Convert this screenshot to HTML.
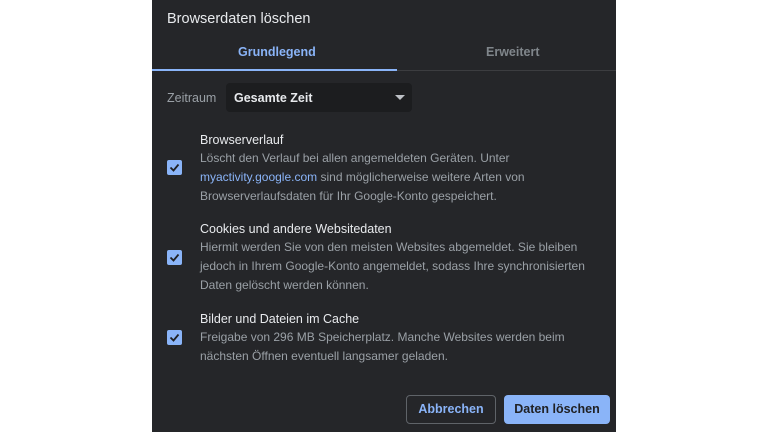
<!DOCTYPE html>
<html><head><style>
body{margin:0;width:768px;height:432px;background:#fff;position:relative;overflow:hidden;font-family:"Liberation Sans",sans-serif}
.d{position:absolute;left:152px;top:0;width:464px;height:432px;background:#252629;color:#e8eaed}
.a{position:absolute;white-space:nowrap}
.t{font-size:12.5px;color:#e8eaed}
.s{font-size:12px;color:#9aa0a6;line-height:19px}
.cb{position:absolute;left:15px;width:15px;height:15px;background:#8ab4f8;border-radius:2px}
.cb svg{position:absolute;left:0;top:0}
</style></head><body>
<div class="d">
<div class="a" style="left:15px;top:11px;font-size:14.5px">Browserdaten löschen</div>
<div class="a" style="left:86px;top:45px;font-size:12.5px;font-weight:bold;color:#8ab4f8">Grundlegend</div>
<div class="a" style="left:334px;top:45px;font-size:12.5px;font-weight:bold;color:#80868b">Erweitert</div>
<div class="a" style="left:0;top:70px;width:464px;height:1px;background:#3c3d40"></div>
<div class="a" style="left:0;top:69px;width:245px;height:2px;background:#8ab4f8"></div>
<div class="a" style="left:15px;top:91px;font-size:12.5px;color:#9aa0a6">Zeitraum</div>
<div class="a" style="left:74px;top:83px;width:186px;height:29px;background:#1c1d1f;border-radius:4px"></div>
<div class="a" style="left:82px;top:91px;font-size:12.5px;font-weight:bold;color:#e8eaed">Gesamte Zeit</div>
<div class="a" style="left:243px;top:95px;width:0;height:0;border-left:5px solid transparent;border-right:5px solid transparent;border-top:5px solid #bdc1c6"></div>

<div class="cb" style="top:160px"><svg width="15" height="15"><path d="M3.5 7.5l3 3 5-6" stroke="#202124" stroke-width="1.8" fill="none"/></svg></div>
<div class="a t" style="left:48px;top:133px">Browserverlauf</div>
<div class="a s" style="left:48px;top:149px">Löscht den Verlauf bei allen angemeldeten Geräten. Unter<br><span style="color:#8ab4f8">myactivity.google.com</span> sind möglicherweise weitere Arten von<br>Browserverlaufsdaten für Ihr Google-Konto gespeichert.</div>

<div class="cb" style="top:250px"><svg width="15" height="15"><path d="M3.5 7.5l3 3 5-6" stroke="#202124" stroke-width="1.8" fill="none"/></svg></div>
<div class="a t" style="left:48px;top:222px">Cookies und andere Websitedaten</div>
<div class="a s" style="left:48px;top:238px">Hiermit werden Sie von den meisten Websites abgemeldet. Sie bleiben<br>jedoch in Ihrem Google-Konto angemeldet, sodass Ihre synchronisierten<br>Daten gelöscht werden können.</div>

<div class="cb" style="top:330px"><svg width="15" height="15"><path d="M3.5 7.5l3 3 5-6" stroke="#202124" stroke-width="1.8" fill="none"/></svg></div>
<div class="a t" style="left:48px;top:312px">Bilder und Dateien im Cache</div>
<div class="a s" style="left:48px;top:328px">Freigabe von 296 MB Speicherplatz. Manche Websites werden beim<br>nächsten Öffnen eventuell langsamer geladen.</div>

<div class="a" style="left:254px;top:395px;border:1px solid #5f6368;border-radius:4px;box-sizing:border-box;width:90px;height:29px;color:#8ab4f8;font-size:12.5px;font-weight:bold;text-align:center;line-height:27px">Abbrechen</div>
<div class="a" style="left:352px;top:395px;width:106px;height:29px;background:#8ab4f8;border-radius:4px;color:#202124;font-size:12.5px;font-weight:bold;text-align:center;line-height:29px">Daten löschen</div>
</div>
</body></html>
